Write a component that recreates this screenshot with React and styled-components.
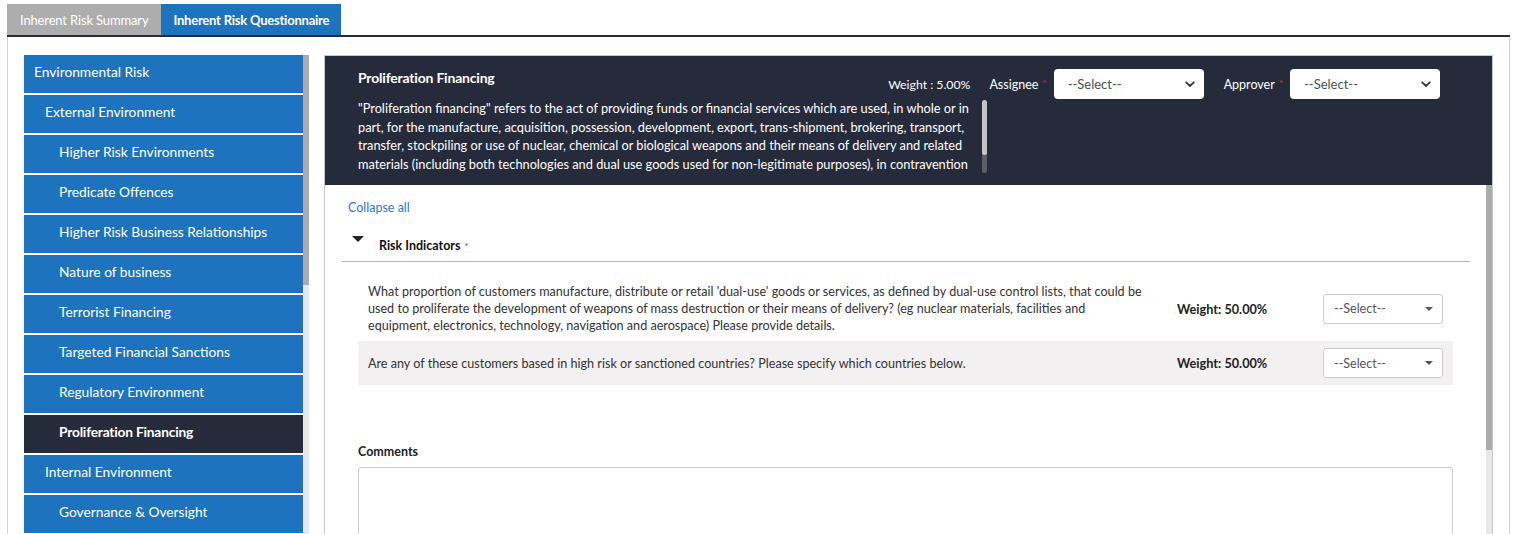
import React from 'react';
import styled, { createGlobalStyle } from 'styled-components';

const GlobalStyle = createGlobalStyle`
  html, body { margin: 0; padding: 0; height: 100%; overflow: hidden; background: #fff; }
  body { font-family: Lato, "Noto Sans", sans-serif; color: #333; }
  *, *::before, *::after { box-sizing: border-box; }
`;

const Page = styled.div`
  height: 534px;
  padding: 4px 10px 0 7px;
  display: flex;
  flex-direction: column;
`;

const TabBar = styled.div`
  display: flex;
  flex: none;
  border-bottom: 2px solid #262b3b;
`;

const Tab = styled.div`
  height: 31px;
  padding: 0 ${p => (p.$active ? 12 : 13)}px;
  display: flex;
  align-items: center;
  font-size: 13px;
  color: #fff;
  background: ${p => (p.$active ? '#1e73be' : '#adadad')};
  font-weight: ${p => (p.$active ? 700 : 400)};
  letter-spacing: ${p => (p.$active ? -0.22 : -0.15)}px;
`;

const Frame = styled.div`
  flex: 1;
  min-height: 0;
  display: flex;
  gap: 15px;
  padding: 18px 16px 0 16px;
  border-left: 1px solid #d3d3d3;
  border-right: 1px solid #d3d3d3;
  overflow: hidden;
`;

const Sidebar = styled.nav`
  width: 285px;
  flex: none;
  display: flex;
  overflow: hidden;
`;

const NavList = styled.ul`
  list-style: none;
  margin: 0;
  padding: 0;
  width: 279px;
  display: flex;
  flex-direction: column;
  gap: 2px;
`;

const NavItem = styled.li`
  height: 38px;
  flex: none;
  display: flex;
  align-items: center;
  padding-left: ${p => p.$indent}px;
  padding-bottom: 5px;
  background: ${p => (p.$active ? '#262b3b' : '#1e73be')};
  color: #fff;
  font-size: 13.75px;
  font-weight: ${p => (p.$active ? 700 : 400)};
  letter-spacing: ${p => (p.$active ? -0.2 : 0)}px;
`;

const ScrollTrack = styled.div`
  width: 6px;
  flex: none;
  background: #e8e8e8;
  display: flex;
  flex-direction: column;
`;

const ScrollThumb = styled.div`
  height: ${p => p.$h}px;
  background: #ababab;
  flex: none;
`;

const Main = styled.section`
  flex: 1;
  min-width: 0;
  border: 1px solid #c8c8c8;
  border-bottom: none;
  display: flex;
  flex-direction: column;
`;

const Header = styled.header`
  flex: none;
  height: 129px;
  background: #262b3b;
  color: #fff;
  padding: 13px 52px 12px 33px;
`;

const HeaderTop = styled.div`
  display: flex;
  justify-content: space-between;
  align-items: flex-start;
  height: 30px;
`;

const Title = styled.h2`
  margin: 0;
  font-size: 14px;
  line-height: 18px;
  font-weight: 700;
  letter-spacing: -0.2px;
`;

const Controls = styled.div`
  display: flex;
  align-items: center;
  height: 30px;
  font-size: 12.5px;
`;

const WeightText = styled.span`
  margin-right: 19px;
  font-size: 12.25px;
`;

const ControlLabel = styled.span`
  margin-right: 7px;
  &::after {
    content: '*';
    color: #e0202a;
    font-size: 10px;
    vertical-align: top;
    margin-left: 4px;
  }
`;

const HeaderSelect = styled.div`
  width: 150px;
  height: 30px;
  background: #fff;
  border-radius: 4px;
  padding: 0 9px 0 14px;
  display: flex;
  align-items: center;
  justify-content: space-between;
  color: #495057;
  font-size: 13px;
  margin-right: ${p => p.$mr || 0}px;
`;

const DescWrap = styled.div`
  display: flex;
  gap: 4px;
  height: 74px;
`;

const DescText = styled.p`
  margin: 0;
  width: 620px;
  height: 74px;
  overflow: hidden;
  font-size: 12.75px;
  line-height: 18.5px;
`;

const DescScroll = styled.div`
  width: 5px;
  height: 73px;
  margin-top: 1px;
  border-radius: 3px;
  background: #5b5e68;
  display: flex;
  flex-direction: column;
`;

const DescThumb = styled.div`
  height: 55px;
  border-radius: 3px;
  background: #c4c4c4;
`;

const Body = styled.div`
  flex: 1;
  min-height: 0;
  display: flex;
`;

const BodyContent = styled.div`
  flex: 1;
  min-width: 0;
  padding: 15px 16px 0 17px;
  overflow: hidden;
`;

const CollapseLink = styled.a`
  display: block;
  width: fit-content;
  margin-left: 6px;
  font-size: 12.5px;
  line-height: 16px;
  color: #2b78e4;
  text-decoration: none;
`;

const SectionHeader = styled.div`
  margin-top: 14px;
  display: flex;
  align-items: flex-start;
  padding: 0 0 7px 10px;
  border-bottom: 1px solid #b4b4b4;
`;

const Caret = styled.span`
  width: 0;
  height: 0;
  margin-top: 6px;
  border-left: 6px solid transparent;
  border-right: 6px solid transparent;
  border-top: 6px solid #222;
`;

const SectionTitle = styled.span`
  margin-top: 8px;
  margin-left: 15px;
  font-size: 12.5px;
  line-height: 16px;
  font-weight: 700;
  color: #111;
  &::after {
    content: '*';
    color: #e0202a;
    font-size: 10px;
    vertical-align: top;
    margin-left: 4px;
    font-weight: 400;
  }
`;

const Questions = styled.div`
  margin: 14px 17px 0 16px;
`;

const QRow = styled.div`
  display: grid;
  grid-template-columns: minmax(0, 1fr) 146px 120px;
  align-items: center;
  padding: 7px 10px;
  background: ${p => (p.$alt ? '#f2f0f0' : 'transparent')};
`;

const QText = styled.div`
  padding-right: 32px;
  font-size: 12.6px;
  line-height: 17px;
  color: #333;
`;

const QWeight = styled.div`
  font-size: 12.7px;
  font-weight: 700;
  color: #222;
`;

const RowSelect = styled.div`
  height: 30px;
  background: #fff;
  border: 1px solid #cccccc;
  border-radius: 3px;
  padding: 0 9px 0 10px;
  display: flex;
  align-items: center;
  justify-content: space-between;
  font-size: 12.5px;
  color: #555;
`;

const SmallTriangle = styled.span`
  width: 0;
  height: 0;
  border-left: 4px solid transparent;
  border-right: 4px solid transparent;
  border-top: 4px solid #555;
`;

const CommentsLabel = styled.label`
  display: block;
  margin: 59px 0 7px 0;
  font-size: 12.5px;
  line-height: 16px;
  font-weight: 700;
  color: #222;
`;

const CommentsBox = styled.textarea`
  display: block;
  width: 100%;
  height: 110px;
  border: 1px solid #c9cdd2;
  border-radius: 3px;
  resize: none;
  font-family: inherit;
`;

const Chevron = () => (
  <svg width="10" height="7" viewBox="0 0 10 7" aria-hidden="true">
    <path d="M1.2 1.3 L5 5 L8.8 1.3" fill="none" stroke="#343a40" strokeWidth="1.8" strokeLinecap="round" strokeLinejoin="round" />
  </svg>
);

const navItems = [
  { label: 'Environmental Risk', indent: 10 },
  { label: 'External Environment', indent: 21 },
  { label: 'Higher Risk Environments', indent: 35 },
  { label: 'Predicate Offences', indent: 35 },
  { label: 'Higher Risk Business Relationships', indent: 35 },
  { label: 'Nature of business', indent: 35 },
  { label: 'Terrorist Financing', indent: 35 },
  { label: 'Targeted Financial Sanctions', indent: 35 },
  { label: 'Regulatory Environment', indent: 35 },
  { label: 'Proliferation Financing', indent: 35, active: true },
  { label: 'Internal Environment', indent: 21 },
  { label: 'Governance & Oversight', indent: 35 },
  { label: 'Staff Vetting & Training', indent: 35 },
];

const questions = [
  {
    text: "What proportion of customers manufacture, distribute or retail 'dual-use' goods or services, as defined by dual-use control lists, that could be used to proliferate the development of weapons of mass destruction or their means of delivery? (eg nuclear materials, facilities and equipment, electronics, technology, navigation and aerospace) Please provide details.",
    weight: '50.00%',
  },
  {
    text: 'Are any of these customers based in high risk or sanctioned countries? Please specify which countries below.',
    weight: '50.00%',
  },
];

export default function App() {
  return (
    <>
      <GlobalStyle />
      <Page>
        <TabBar>
          <Tab>Inherent Risk Summary</Tab>
          <Tab $active>Inherent Risk Questionnaire</Tab>
        </TabBar>
        <Frame>
          <Sidebar>
            <NavList>
              {navItems.map(item => (
                <NavItem key={item.label} $indent={item.indent} $active={item.active}>
                  {item.label}
                </NavItem>
              ))}
            </NavList>
            <ScrollTrack>
              <ScrollThumb $h={230} />
            </ScrollTrack>
          </Sidebar>
          <Main>
            <Header>
              <HeaderTop>
                <Title>Proliferation Financing</Title>
                <Controls>
                  <WeightText>Weight : 5.00%</WeightText>
                  <ControlLabel>Assignee</ControlLabel>
                  <HeaderSelect $mr={20}>
                    --Select--
                    <Chevron />
                  </HeaderSelect>
                  <ControlLabel>Approver</ControlLabel>
                  <HeaderSelect>
                    --Select--
                    <Chevron />
                  </HeaderSelect>
                </Controls>
              </HeaderTop>
              <DescWrap>
                <DescText>
                  "Proliferation financing" refers to the act of providing funds or financial services which are used, in whole or in part, for the manufacture, acquisition, possession, development, export, trans-shipment, brokering, transport, transfer, stockpiling or use of nuclear, chemical or biological weapons and their means of delivery and related materials (including both technologies and dual use goods used for non-legitimate purposes), in contravention of national laws or, where applicable, international obligations.
                </DescText>
                <DescScroll>
                  <DescThumb />
                </DescScroll>
              </DescWrap>
            </Header>
            <Body>
              <BodyContent>
                <CollapseLink href="#">Collapse all</CollapseLink>
                <SectionHeader>
                  <Caret />
                  <SectionTitle>Risk Indicators</SectionTitle>
                </SectionHeader>
                <Questions>
                  {questions.map((q, i) => (
                    <QRow key={i} $alt={i % 2 === 1}>
                      <QText>{q.text}</QText>
                      <QWeight>Weight: {q.weight}</QWeight>
                      <RowSelect>
                        --Select--
                        <SmallTriangle />
                      </RowSelect>
                    </QRow>
                  ))}
                  <CommentsLabel>Comments</CommentsLabel>
                  <CommentsBox />
                </Questions>
              </BodyContent>
              <ScrollTrack>
                <ScrollThumb $h={265} />
              </ScrollTrack>
            </Body>
          </Main>
        </Frame>
      </Page>
    </>
  );
}
